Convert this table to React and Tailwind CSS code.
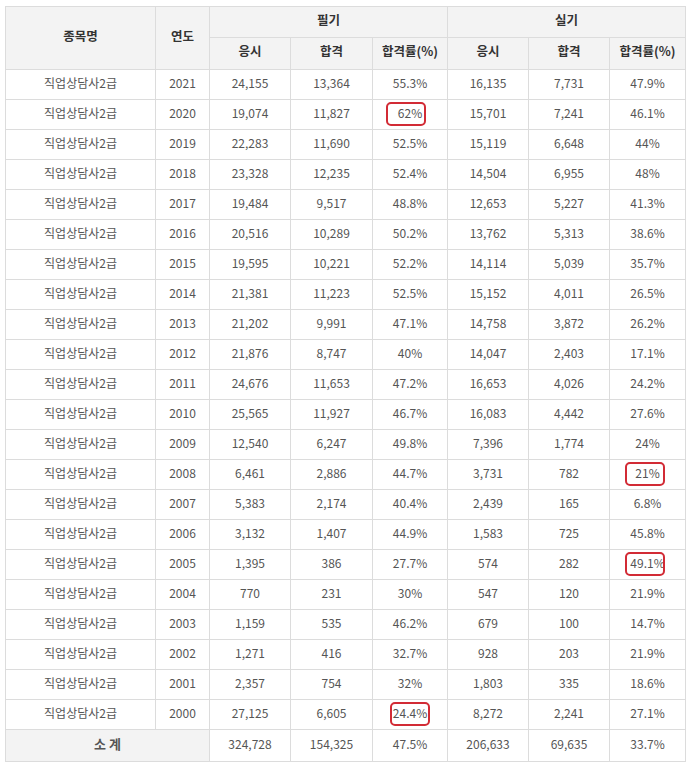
const rows = [
  [2021, '24,155', '13,364', '55.3%', '16,135', '7,731', '47.9%'],
  [2020, '19,074', '11,827', '62%', '15,701', '7,241', '46.1%'],
  [2019, '22,283', '11,690', '52.5%', '15,119', '6,648', '44%'],
  [2018, '23,328', '12,235', '52.4%', '14,504', '6,955', '48%'],
  [2017, '19,484', '9,517', '48.8%', '12,653', '5,227', '41.3%'],
  [2016, '20,516', '10,289', '50.2%', '13,762', '5,313', '38.6%'],
  [2015, '19,595', '10,221', '52.2%', '14,114', '5,039', '35.7%'],
  [2014, '21,381', '11,223', '52.5%', '15,152', '4,011', '26.5%'],
  [2013, '21,202', '9,991', '47.1%', '14,758', '3,872', '26.2%'],
  [2012, '21,876', '8,747', '40%', '14,047', '2,403', '17.1%'],
  [2011, '24,676', '11,653', '47.2%', '16,653', '4,026', '24.2%'],
  [2010, '25,565', '11,927', '46.7%', '16,083', '4,442', '27.6%'],
  [2009, '12,540', '6,247', '49.8%', '7,396', '1,774', '24%'],
  [2008, '6,461', '2,886', '44.7%', '3,731', '782', '21%'],
  [2007, '5,383', '2,174', '40.4%', '2,439', '165', '6.8%'],
  [2006, '3,132', '1,407', '44.9%', '1,583', '725', '45.8%'],
  [2005, '1,395', '386', '27.7%', '574', '282', '49.1%'],
  [2004, '770', '231', '30%', '547', '120', '21.9%'],
  [2003, '1,159', '535', '46.2%', '679', '100', '14.7%'],
  [2002, '1,271', '416', '32.7%', '928', '203', '21.9%'],
  [2001, '2,357', '754', '32%', '1,803', '335', '18.6%'],
  [2000, '27,125', '6,605', '24.4%', '8,272', '2,241', '27.1%'],
];

// annotated cells: year -> column index (in row array) -> left offset of the red box
const marks = {
  2020: { 3: 13 },
  2000: { 3: 17 },
  2008: { 6: 15 },
  2005: { 6: 15 },
};

const th = 'border border-[#dcdcdc] bg-[#f3f3f3] font-bold text-[#333] text-[12.5px] text-center p-0 pb-[4px]';
const td = 'border border-[#dcdcdc] text-[#555] text-[12px] text-center h-[30px] p-0 pb-[4px]';

export default function App() {
  return (
    <div className="bg-white w-[691px] h-[774px] pt-[6px] pl-[5px]" style={{ fontFamily: '"Noto Sans CJK KR", "Noto Sans", sans-serif' }}>
      <table className="border-collapse table-fixed w-[680px]">
        <colgroup>
          <col className="w-[150px]" />
          <col className="w-[54px]" />
          <col className="w-[81px]" />
          <col className="w-[82px]" />
          <col className="w-[75px]" />
          <col className="w-[81px]" />
          <col className="w-[81px]" />
          <col className="w-[76px]" />
        </colgroup>
        <thead>
          <tr>
            <th rowSpan={2} className={th}>종목명</th>
            <th rowSpan={2} className={th}>연도</th>
            <th colSpan={3} className={`${th} h-[31px]`}>필기</th>
            <th colSpan={3} className={`${th} h-[31px]`}>실기</th>
          </tr>
          <tr>
            {['응시', '합격', '합격률(%)', '응시', '합격', '합격률(%)'].map((t, i) => (
              <th key={i} className={`${th} h-[32px]`}>{t}</th>
            ))}
          </tr>
        </thead>
        <tbody>
          {rows.map((r) => (
            <tr key={r[0]}>
              <td className={td}>직업상담사2급</td>
              {r.map((v, i) => {
                const left = marks[r[0]]?.[i];
                return (
                  <td key={i} className={`${td} ${left !== undefined ? 'relative' : ''}`}>
                    {v}
                    {left !== undefined && (
                      <span
                        className="absolute top-[2px] w-[40px] h-[24px] border-2 border-[#d22b35] rounded-[5px]"
                        style={{ left }}
                      />
                    )}
                  </td>
                );
              })}
            </tr>
          ))}
          <tr>
            <td colSpan={2} className={`${td} h-[32px] bg-[#f3f3f3] font-bold text-[#222] text-[13px]`}>소 계</td>
            {['324,728', '154,325', '47.5%', '206,633', '69,635', '33.7%'].map((v, i) => (
              <td key={i} className={`${td} h-[32px]`}>{v}</td>
            ))}
          </tr>
        </tbody>
      </table>
    </div>
  );
}
